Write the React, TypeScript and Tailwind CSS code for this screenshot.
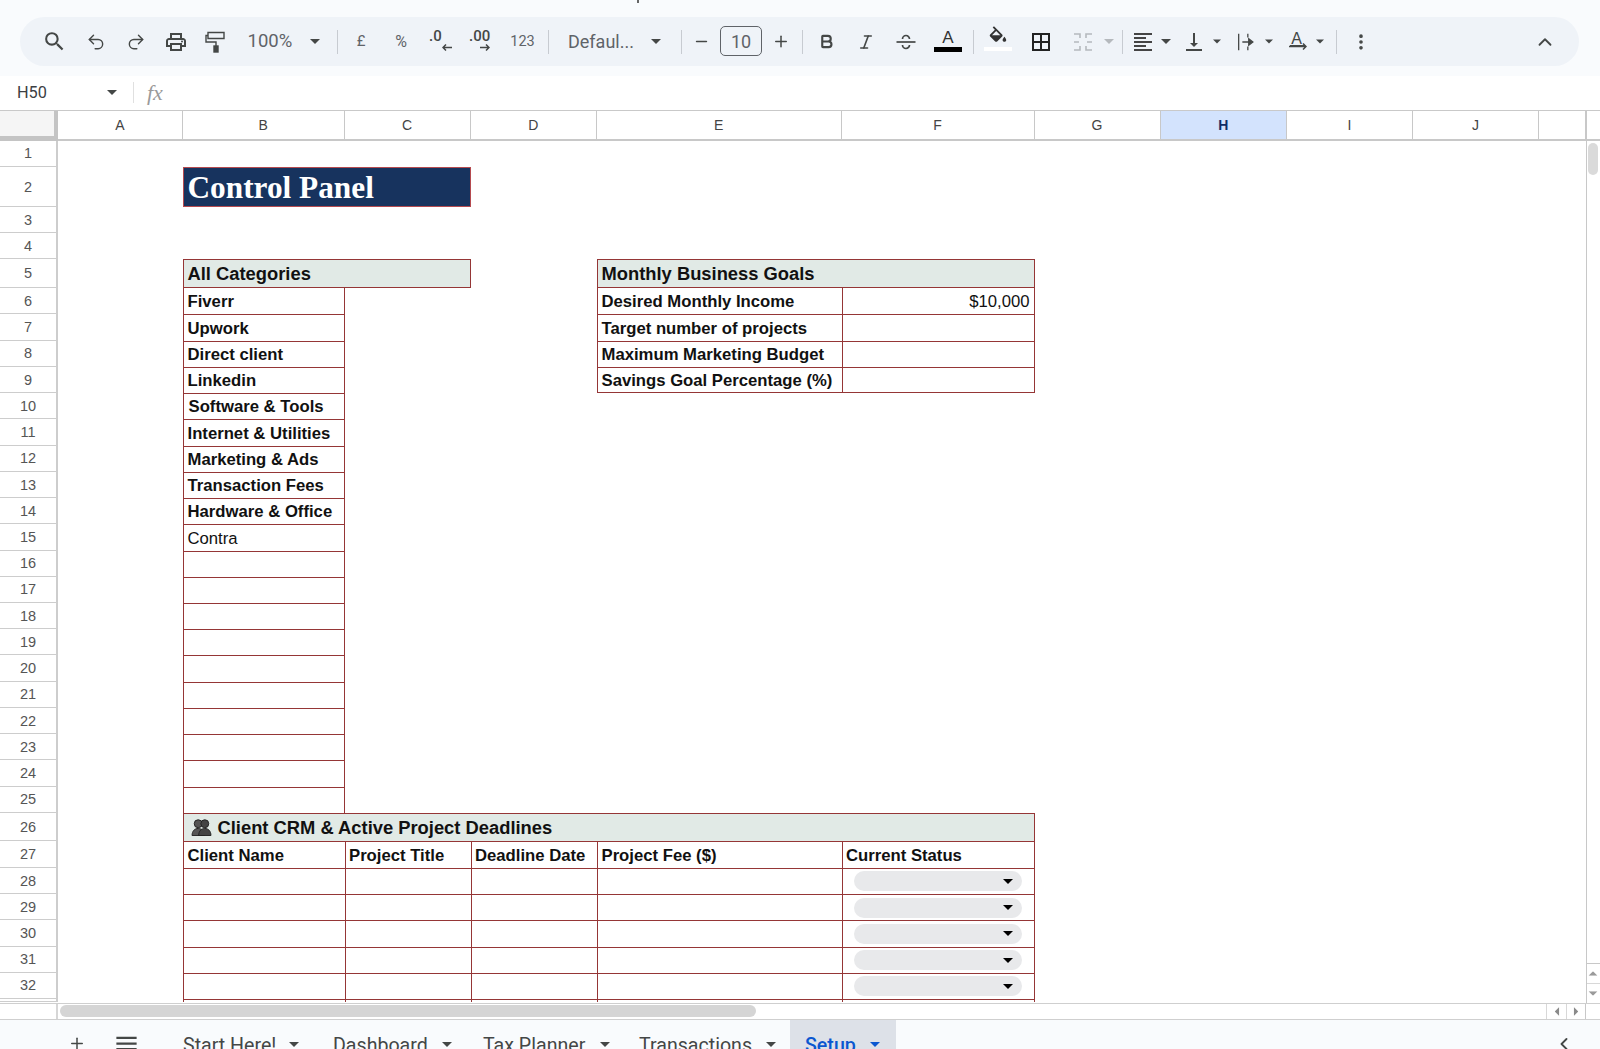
import { Undo2, Redo2, Bold, Italic, Plus, Minus, ChevronLeft, ChevronUp, EllipsisVertical } from "lucide-react";
import {
  MdSearch,
  MdOutlineLocalPrintshop,
  MdOutlineBorderAll,
  MdFormatAlignLeft,
  MdVerticalAlignBottom,
  MdMenu,
} from "react-icons/md";
import type { ReactNode } from "react";

const COLS = "grid grid-cols-[58px_125px_161.5px_126px_126.5px_244.5px_193px_126px_126.5px_126px_126px_46.5px]";
const BOX = "flex items-center border-[#953636] pl-[3.5px] text-[16.7px] leading-none text-[#111] whitespace-nowrap";
const CELL = `${BOX} pt-[2px]`;

const CATEGORIES = [
  "Fiverr",
  "Upwork",
  "Direct client",
  "Linkedin",
  "Software & Tools",
  "Internet & Utilities",
  "Marketing & Ads",
  "Transaction Fees",
  "Hardware & Office",
  "Contra",
];

const GOALS = ["Desired Monthly Income", "Target number of projects", "Maximum Marketing Budget", "Savings Goal Percentage (%)"];
const COLUMN_LETTERS = ["A", "B", "C", "D", "E", "F", "G", "H", "I", "J", ""];
const CRM_HEADINGS = ["Client Name", "Project Title", "Deadline Date", "Project Fee ($)", "Current Status"];

const Caret = ({ className = "text-[#444746]" }: { className?: string }) => (
  <svg viewBox="0 0 10 5" className={`w-[10px] h-[5px] fill-current ${className}`}>
    <path d="M0 0h10L5 5z" />
  </svg>
);

const Slot = ({ className, children }: { className: string; children?: ReactNode }) => (
  <div className={`flex items-center justify-center shrink-0 h-full ${className}`}>{children}</div>
);

const Divider = ({ className }: { className: string }) => (
  <Slot className={className}>
    <div className="w-px h-[24px] bg-[#c7cbd1]" />
  </Slot>
);

const Toolbar = () => (
  <div className="h-[76px] bg-[#f9fbfd] shrink-0 text-[#444746] font-['Roboto',sans-serif]">
    <div className="h-[17px]">
      <div className="ml-[637px] w-[2px] h-[3px] bg-[#666]" />
    </div>
    <div className="mx-[20px] w-[1559px] h-[49px] rounded-full bg-[#eff3f8] flex items-center pl-[14px] pr-[19px]">
      <Slot className="w-[40px]"><MdSearch size={25} /></Slot>
      <Slot className="w-[44px]"><Undo2 size={20} strokeWidth={1.7} /></Slot>
      <Slot className="w-[36px]"><Redo2 size={20} strokeWidth={1.7} /></Slot>
      <Slot className="w-[44px]"><MdOutlineLocalPrintshop size={24} /></Slot>
      <Slot className="w-[34px]">
        <svg viewBox="0 0 24 24" className="w-[24px] h-[24px] fill-none stroke-current stroke-[1.4]">
          <path d="M5 2.5h16v6H5z" />
          <path d="M5 5.5H3v6.5h10v4" />
          <rect x="11" y="16" width="4" height="6" className="fill-current" />
        </svg>
      </Slot>
      <Slot className="w-[70px] justify-start pl-[15.5px] text-[18.5px] text-[#5f6368]">100%</Slot>
      <Slot className="w-[26px]"><Caret /></Slot>
      <Divider className="w-[18px]" />
      <Slot className="w-[30px] text-[15px] text-[#5f6368]">£</Slot>
      <Slot className="w-[50px] text-[16px] text-[#5f6368]">%</Slot>
      <Slot className="w-[30px]">
        <div className="flex flex-col leading-none text-[15px] font-medium mt-[-4px] w-[24px]">
          <span className="leading-[14px]">.0</span>
          <svg viewBox="0 0 10 7" className="w-[10px] h-[7px] ml-[13px] mt-[1px] stroke-current fill-none stroke-[1.5]">
            <path d="M10 3.5H1M4 .5l-3 3 3 3" />
          </svg>
        </div>
      </Slot>
      <Slot className="w-[50px]">
        <div className="flex flex-col leading-none text-[15px] font-medium mt-[-4px] w-[24px]">
          <span className="leading-[14px]">.00</span>
          <svg viewBox="0 0 10 7" className="w-[10px] h-[7px] ml-[11px] mt-[1px] stroke-current fill-none stroke-[1.5]">
            <path d="M0 3.5h9M6 .5l3 3-3 3" />
          </svg>
        </div>
      </Slot>
      <Slot className="w-[33px] text-[14.5px] text-[#5f6368]">123</Slot>
      <Divider className="w-[18px]" />
      <Slot className="w-[85px] justify-start pl-[11px] text-[18px] text-[#5f6368]">Defaul...</Slot>
      <Slot className="w-[28px]"><Caret /></Slot>
      <Divider className="w-[22px]" />
      <Slot className="w-[18px]"><Minus size={17} strokeWidth={2} /></Slot>
      <Slot className="w-[62px]">
        <div className="w-[42px] h-[30px] rounded-[5px] border border-[#5f6368] flex items-center justify-center text-[18px] text-[#5f6368] mt-[-1px]">
          10
        </div>
      </Slot>
      <Slot className="w-[18px]"><Plus size={19} strokeWidth={2} /></Slot>
      <Divider className="w-[24px]" />
      <Slot className="w-[24px]"><Bold size={17} strokeWidth={3} /></Slot>
      <Slot className="w-[56px]"><Italic size={18} strokeWidth={2.2} /></Slot>
      <Slot className="w-[24px]">
        <svg viewBox="0 0 24 24" className="w-[24px] h-[24px] fill-none stroke-current stroke-[1.7]">
          <path d="M2.5 12h19" />
          <path d="M8.5 9a3.5 3.5 0 0 1 7 0M8.5 15a3.5 3.5 0 0 0 7 0" />
        </svg>
      </Slot>
      <Slot className="w-[40px] ml-[10px]">
        <div className="flex flex-col items-center w-[28px] mt-[-1px]">
          <span className="font-['Liberation_Sans',sans-serif] text-[17px] leading-[15px] text-[#333]">A</span>
          <div className="w-[28px] h-[4.5px] bg-black mt-[2px]" />
        </div>
      </Slot>
      <Divider className="w-[10px]" />
      <Slot className="w-[40px]">
        <div className="flex flex-col items-center w-[28px] mt-[-6px]">
          <svg viewBox="0 0 24 18" className="w-[22px] h-[17px] fill-current text-[#333]">
            <path d="M16.56 8.94L7.62 0 6.21 1.41l2.38 2.38-5.15 5.15c-.59.59-.59 1.54 0 2.12l5.5 5.5c.29.29.68.44 1.06.44s.77-.15 1.06-.44l5.5-5.5c.59-.58.59-1.53 0-2.12zM5.21 10L10 5.21 14.79 10H5.21zM19 11.5s-2 2.17-2 3.5c0 1.1.9 2 2 2s2-.9 2-2c0-1.33-2-3.5-2-3.5z" />
            <path d="M4 10h12l-6 6z" />
          </svg>
          <div className="w-[28px] h-[4px] bg-white mt-[4px]" />
        </div>
      </Slot>
      <Slot className="w-[40px] ml-[3px]"><MdOutlineBorderAll size={24} className="text-[#222]" /></Slot>
      <Slot className="w-[40px] ml-[2px]">
        <svg viewBox="0 0 24 24" className="w-[24px] h-[24px] fill-none stroke-[#b5b9bd] stroke-[1.6]">
          <path d="M3 4h6v4M3 20h6v-4M21 4h-6v4M21 20h-6v-4M3 12h5M21 12h-5" />
        </svg>
      </Slot>
      <Slot className="w-[12px]"><Caret className="text-[#b5b9bd]" /></Slot>
      <Divider className="w-[14px]" />
      <Slot className="w-[28px]"><MdFormatAlignLeft size={24} className="text-[#444]" /></Slot>
      <Slot className="w-[18px]"><Caret /></Slot>
      <Slot className="w-[38px]"><MdVerticalAlignBottom size={24} /></Slot>
      <Slot className="w-[8px]"><Caret /></Slot>
      <Slot className="w-[38px] ml-[6px]">
        <svg viewBox="0 0 24 24" className="w-[22px] h-[22px] fill-none stroke-current stroke-[1.4]">
          <path d="M4 3v18M14 3v4M14 17v4M8 12h8" />
          <path d="M15 8.5l4.5 3.5-4.5 3.5z" className="fill-current" />
        </svg>
      </Slot>
      <Slot className="w-[8px]"><Caret /></Slot>
      <Slot className="w-[36px] ml-[7px]">
        <div className="flex flex-col items-center w-[18px] mt-[-1px]">
          <span className="font-['Liberation_Sans',sans-serif] text-[16px] leading-[13px] border-b-[1.5px] border-[#444746] w-[14px] text-center mr-[3px]">A</span>
          <svg viewBox="0 0 18 7" className="w-[18px] h-[7px] stroke-current fill-none stroke-[1.5] mt-[-3px]">
            <path d="M0 3.5h17M14 .5l3 3-3 3" />
          </svg>
        </div>
      </Slot>
      <Slot className="w-[8px]"><Caret /></Slot>
      <Divider className="w-[24px]" />
      <Slot className="w-[26px]"><EllipsisVertical size={20} strokeWidth={2.4} /></Slot>
      <Slot className="w-[30px] ml-auto"><ChevronUp size={22} strokeWidth={2} /></Slot>
    </div>
  </div>
);

const FormulaBar = () => (
  <div className="h-[34.5px] bg-white flex items-center shrink-0 border-b border-[#c9c9c9]">
    <div className="w-[106px] pl-[17px] text-[16.3px] text-[#3c4043] font-['Roboto',sans-serif]">H50</div>
    <Slot className="w-[12px]"><Caret /></Slot>
    <div className="w-px h-[21px] bg-[#e0e0e0] ml-[15px]" />
    <span className="ml-[13px] font-['Liberation_Serif',serif] italic text-[22px] text-[#9a9a9a]">fx</span>
  </div>
);

const ColumnHeader = () => (
  <div className={`${COLS} h-[30.5px] font-['Liberation_Sans',sans-serif] text-[14px]`}>
    <div className="bg-[#f5f5f5] border-r-4 border-b-[5px] border-[#c4c4c4]" />
    {COLUMN_LETTERS.map((letter, i) => (
      <div
        key={i}
        className={
          letter === "H"
            ? "flex items-center justify-center pt-[2px] bg-[#d3e3fd] border-r border-b-2 border-[#c8c8c8] font-bold text-[#0f2d66]"
            : "flex items-center justify-center pt-[2px] border-r border-b-2 border-[#c8c8c8] text-[#444]"
        }
      >
        {letter}
      </div>
    ))}
  </div>
);

const Row = ({ n, height, children }: { n?: number; height: string; children?: ReactNode }) => (
  <div className={`${COLS} ${height} bg-white`}>
    <div className="col-start-1 flex items-center justify-center pt-[2px] border-r-2 border-b border-[#cdcdcd] text-[14.5px] text-[#555] overflow-hidden">
      {n}
    </div>
    {children}
  </div>
);

const PeopleIcon = () => (
  <svg viewBox="0 0 22 18" className="w-[21px] h-[17px] mr-[6px] ml-[3px] mb-[2px]">
    <circle cx="7.5" cy="5" r="4.2" fill="#555" stroke="#222" strokeWidth="1" />
    <circle cx="14.5" cy="5" r="4.2" fill="#444" stroke="#222" strokeWidth="1" />
    <path d="M1 17.5c0-5 3-7.5 6.5-7.5s6.5 2.5 6.5 7.5z" fill="#555" stroke="#222" strokeWidth="1" />
    <path d="M8 17.5c0-5 3-7.5 6.5-7.5s6.5 2.5 6.5 7.5z" fill="#444" stroke="#222" strokeWidth="1" />
  </svg>
);

const EmptyTableRow = ({ n }: { n?: number }) => (
  <>
    <div className={`col-start-3 ${CELL} border-l border-t`} />
    <div className={`col-start-4 ${CELL} border-l border-t`} />
    <div className={`col-start-5 ${CELL} border-l border-t`} />
    <div className={`col-start-6 ${CELL} border-l border-t`} />
    <div className="col-start-7 flex items-center justify-center border-l border-r border-t border-[#953636]">
      {n && (
        <div className="w-[168.5px] h-[20px] rounded-full bg-[#e8e9eb] flex items-center justify-end pr-[9px]">
          <Caret className="text-black" />
        </div>
      )}
    </div>
  </>
);

const Sheet = () => {
  const rows = [];
  for (let n = 6; n <= 25; n++) {
    const i = n - 6;
    const goal = GOALS[i];
    rows.push(
      <Row key={n} n={n} height="h-[26.25px]">
        <div className={`col-start-3 ${BOX} ${n === 10 ? "pl-[4.5px]" : ""} pt-[2px] border-l border-r ${i > 0 ? "border-t" : ""} ${n === 15 ? "font-normal" : "font-bold"}`}>
          {CATEGORIES[i]}
        </div>
        {goal && (
          <>
            <div className={`col-start-6 ${CELL} border-l font-bold ${i > 0 ? "border-t" : ""} ${i === 3 ? "border-b" : ""}`}>{goal}</div>
            <div className={`col-start-7 ${CELL} border-l border-r justify-end pr-[4px] ${i > 0 ? "border-t" : ""} ${i === 3 ? "border-b" : ""}`}>
              {i === 0 ? "$10,000" : ""}
            </div>
          </>
        )}
      </Row>
    );
  }

  return (
    <div className="w-[1585.5px] flex flex-col font-['Liberation_Sans',sans-serif]">
      <ColumnHeader />
      <Row n={1} height="h-[25.7px]" />
      <Row n={2} height="h-[40.6px]">
        <div className="col-start-3 col-span-2 flex items-center bg-[#17335e] border border-[#b54a4f] pl-[3.5px] pt-[2px] font-['Liberation_Serif',serif] font-bold text-[31.3px] leading-none text-white whitespace-nowrap">
          Control Panel
        </div>
      </Row>
      <Row n={3} height="h-[26px]" />
      <Row n={4} height="h-[26px]" />
      <Row n={5} height="h-[29px]">
        <div className={`col-start-3 col-span-2 ${BOX} border bg-[#e1eae6] font-bold text-[18.35px]`}>All Categories</div>
        <div className={`col-start-6 col-span-2 ${BOX} border bg-[#e1eae6] font-bold text-[18.35px]`}>Monthly Business Goals</div>
      </Row>
      {rows}
      <Row n={26} height="h-[28.4px]">
        <div className={`col-start-3 col-span-5 ${BOX} pt-[1px] border-l border-r border-t bg-[#e1eae6] font-bold text-[18.35px]`}>
          <PeopleIcon />
          Client CRM &amp; Active Project Deadlines
        </div>
      </Row>
      <Row n={27} height="h-[26.6px]">
        {CRM_HEADINGS.map((heading, i) => (
          <div
            key={heading}
            className={`${["col-start-3", "col-start-4", "col-start-5", "col-start-6", "col-start-7"][i]} ${CELL} border-l border-t font-bold ${i === 4 ? "border-r" : ""}`}
          >
            {heading}
          </div>
        ))}
      </Row>
      {[28, 29, 30, 31, 32].map((n) => (
        <Row key={n} n={n} height="h-[26.25px]">
          <EmptyTableRow n={n} />
        </Row>
      ))}
      <Row height="h-[3.5px]">
        <EmptyTableRow />
      </Row>
    </div>
  );
};

const VerticalScroll = () => (
  <div className="w-[14.5px] h-full border-l border-[#c8c8c8] bg-white flex flex-col items-center">
    <div className="h-[30.5px] w-full border-b-2 border-[#c8c8c8]" />
    <div className="w-[10px] h-[32px] rounded-full bg-[#dadada] mt-[2px]" />
    <div className="flex-1" />
    <div className="w-full h-[20px] border-t border-[#c8c8c8] flex items-center justify-center">
      <Caret className="text-[#9a9a9a] rotate-180 scale-90" />
    </div>
    <div className="w-full h-[20px] border-t border-[#d8d8d8] flex items-center justify-center">
      <Caret className="text-[#9a9a9a] scale-90" />
    </div>
  </div>
);

const HorizontalScroll = () => (
  <div className="h-[16.5px] bg-white border-t border-[#cfcfcf] flex items-center shrink-0">
    <div className="w-[58px] h-full border-r-2 border-[#d6d6d6] shrink-0" />
    <div className="ml-[2px] w-[696px] h-[12px] rounded-full bg-[#d5d5d5]" />
    <div className="ml-auto w-[20px] h-full border-l border-[#d8d8d8] flex items-center justify-center">
      <Caret className="text-[#8a8a8a] rotate-90 scale-90" />
    </div>
    <div className="w-[19px] h-full border-l border-[#d8d8d8] flex items-center justify-center">
      <Caret className="text-[#8a8a8a] -rotate-90 scale-90" />
    </div>
    <div className="w-[15px] h-full border-l border-[#c8c8c8]" />
  </div>
);

const TABS = [
  { label: "Start Here!", box: "w-[150px]", gap: "ml-[13px]" },
  { label: "Dashboard", box: "w-[150px]", gap: "ml-[14px]" },
  { label: "Tax Planner", box: "w-[156px]", gap: "ml-[15px]" },
  { label: "Transactions", box: "w-[151px]", gap: "ml-[14px]" },
];

const TabBar = () => (
  <div className="h-[30px] shrink-0 bg-[#f9fbfd] border-t border-[#cfcfcf] flex overflow-hidden text-[#444746] font-['Roboto',sans-serif] text-[19.6px]">
    <div className="ml-[68px] w-[18px] flex justify-center pt-[14px]"><Plus size={19} strokeWidth={2} /></div>
    <div className="ml-[25px] w-[30px] flex justify-center pt-[10px]"><MdMenu size={27} /></div>
    <div className="ml-[42px] flex">
      {TABS.map((tab) => (
        <div key={tab.label} className={`${tab.box} flex items-start pt-[11px] whitespace-nowrap`}>
          <span>{tab.label}</span>
          <Caret className={`text-[#444746] ${tab.gap} mt-[11px]`} />
        </div>
      ))}
    </div>
    <div className="w-[106px] bg-[#dde1e8] pl-[15px] pt-[11px] flex items-start text-[#0b57d0] font-medium">
      <span>Setup</span>
      <Caret className="text-[#0b57d0] ml-[14px] mt-[11px]" />
    </div>
    <div className="ml-auto mr-[26px] pt-[14px]"><ChevronLeft size={20} strokeWidth={2.2} /></div>
  </div>
);

export default function App() {
  return (
    <div className="w-[1600px] h-[1049px] overflow-hidden flex flex-col bg-white">
      <Toolbar />
      <FormulaBar />
      <div className="flex h-[892px] overflow-hidden shrink-0">
        <Sheet />
        <VerticalScroll />
      </div>
      <HorizontalScroll />
      <TabBar />
    </div>
  );
}
